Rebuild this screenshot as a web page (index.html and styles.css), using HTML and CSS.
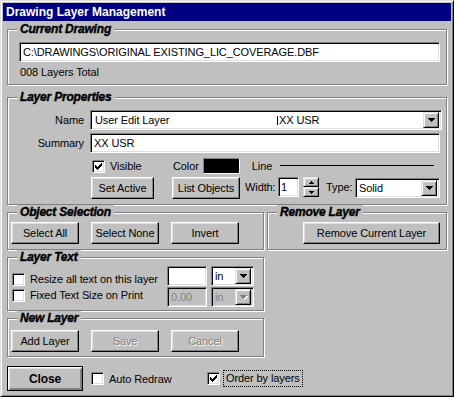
FILE: index.html
```html
<!DOCTYPE html>
<html lang="en">
<head>
    <meta charset="UTF-8">
    <title>Drawing Layer Management</title>
    <link rel="stylesheet" href="styles.css">
</head>
<body>

<div class="window">
    <div class="titlebar">Drawing Layer Management</div>

    <div class="content">
        <div class="group current">
            <span class="group-title">Current Drawing</span>
            <div class="field path">C:\DRAWINGS\ORIGINAL EXISTING_LIC_COVERAGE.DBF</div>
            <div class="count">008 Layers Total</div>
        </div>

        <div class="group props">
            <span class="group-title">Layer Properties</span>
            <div class="prop-grid">
                <span class="prop-label">Name</span>
                <div class="field combo name-combo">
                    <span class="combo-text name-text">User Edit Layer</span>
                    <span class="combo-text name-extra"><span class="tab-mark"></span>XX USR</span>
                    <span class="drop"><svg width="7" height="4" viewBox="0 0 7 4"><path d="M0 0h7v1h-1v1h-1v1h-1v1h-1v-1h-1v-1h-1v-1h-1z"/></svg></span>
                </div>

                <span class="prop-label summary-label">Summary</span>
                <div class="field summary">XX USR</div>

                <span></span>
                <div class="prop-row style-row">
                    <span class="check visible-check"><svg width="7" height="7" viewBox="0 0 7 7"><path d="M0 2h1v3h-1zM1 3h1v3h-1zM2 4h1v3h-1zM3 3h1v3h-1zM4 2h1v3h-1zM5 1h1v3h-1zM6 0h1v3h-1z"/></svg></span>
                    <span class="visible-label">Visible</span>
                    <span>Color</span>
                    <span class="swatch"></span>
                    <span class="line-label">Line</span>
                    <span class="line-sample"></span>
                </div>

                <span></span>
                <div class="prop-row action-row">
                    <button class="btn set-active">Set Active</button>
                    <button class="btn list-objects">List Objects</button>
                    <span class="w-label">Width:</span>
                    <div class="field width-input">1</div>
                    <div class="spinner">
                        <span class="spin-btn"><svg width="5" height="3" viewBox="0 0 5 3"><path d="M2 0h1v1h1v1h1v1h-5v-1h1v-1h1z"/></svg></span>
                        <span class="spin-btn"><svg width="5" height="3" viewBox="0 0 5 3"><path d="M0 0h5v1h-1v1h-1v1h-1v-1h-1v-1h-1z"/></svg></span>
                    </div>
                    <span class="t-label">Type:</span>
                    <div class="field combo type-combo">
                        <span class="combo-text">Solid</span>
                        <span class="drop"><svg width="7" height="4" viewBox="0 0 7 4"><path d="M0 0h7v1h-1v1h-1v1h-1v1h-1v-1h-1v-1h-1v-1h-1z"/></svg></span>
                    </div>
                </div>
            </div>
        </div>

        <div class="lower">
            <div class="left-col">
                <div class="group objsel">
                    <span class="group-title">Object Selection</span>
                    <button class="btn wide">Select All</button>
                    <button class="btn wide">Select None</button>
                    <button class="btn wide">Invert</button>
                </div>

                <div class="group layertext">
                    <span class="group-title">Layer Text</span>
                    <div class="lt-checks">
                        <div class="lt-check-row">
                            <span class="check"></span>
                            <span class="check-text">Resize all text on this layer</span>
                        </div>
                        <div class="lt-check-row">
                            <span class="check"></span>
                            <span class="check-text">Fixed Text Size on Print</span>
                        </div>
                    </div>
                    <div class="lt-fields">
                        <div class="lt-row">
                            <div class="field lt-input"></div>
                            <div class="field combo lt-combo">
                                <span class="combo-text">in</span>
                                <span class="drop"><svg width="7" height="4" viewBox="0 0 7 4"><path d="M0 0h7v1h-1v1h-1v1h-1v1h-1v-1h-1v-1h-1v-1h-1z"/></svg></span>
                            </div>
                        </div>
                        <div class="lt-row">
                            <div class="field lt-input disabled">0.00</div>
                            <div class="field combo lt-combo disabled">
                                <span class="combo-text">in</span>
                                <span class="drop"><svg width="7" height="4" viewBox="0 0 7 4"><path d="M0 0h7v1h-1v1h-1v1h-1v1h-1v-1h-1v-1h-1v-1h-1z"/></svg></span>
                            </div>
                        </div>
                    </div>
                </div>

                <div class="group newlayer">
                    <span class="group-title">New Layer</span>
                    <button class="btn wide">Add Layer</button>
                    <button class="btn wide" disabled>Save</button>
                    <button class="btn wide" disabled>Cancel</button>
                </div>
            </div>

            <div class="group remove">
                <span class="group-title">Remove Layer</span>
                <button class="btn remove-btn">Remove Current Layer</button>
            </div>
        </div>

        <div class="bottom">
            <button class="btn close">Close</button>
            <span class="check auto-check"></span>
            <span class="auto-label">Auto Redraw</span>
            <span class="check order-check"><svg width="7" height="7" viewBox="0 0 7 7"><path d="M0 2h1v3h-1zM1 3h1v3h-1zM2 4h1v3h-1zM3 3h1v3h-1zM4 2h1v3h-1zM5 1h1v3h-1zM6 0h1v3h-1z"/></svg></span>
            <span class="focus-label">Order by layers</span>
        </div>
    </div>
</div>

</body>
</html>
```

FILE: styles.css
```css
* {
    box-sizing: border-box;
}
body {
    margin: 0;
    font-family: "Liberation Sans", Arial, sans-serif;
    font-size: 11px;
    letter-spacing: -0.1px;
    color: #000;
    background-color: #c0c0c0;
}
.window {
    width: 454px;
    height: 397px;
    padding: 2px;
    background-color: #c0c0c0;
    border: 1px solid;
    border-color: #dfdfdf #000 #000 #dfdfdf;
    box-shadow: inset 1px 1px #fff, inset -1px -1px #808080;
}
.titlebar {
    height: 18px;
    line-height: 18px;
    padding-left: 3px;
    background-color: #000080;
    color: #fff;
    font-weight: bold;
    font-size: 12px;
    letter-spacing: 0;
}
.content {
    padding: 8px 4px 0 4px;
}

/* etched group boxes */
.group {
    position: relative;
    border: 1px solid #808080;
    box-shadow: inset 1px 1px #fff, 1px 1px #fff;
}
.group-title {
    position: absolute;
    top: -8px;
    left: 9px;
    padding: 0 3px;
    background-color: #c0c0c0;
    font-size: 12px;
    line-height: 14px;
    font-weight: bold;
    font-style: italic;
    letter-spacing: -0.2px;
    -webkit-text-stroke: 0.4px #000;
}

/* sunken fields */
.field {
    background-color: #fff;
    border: 1px solid;
    border-color: #808080 #fff #fff #808080;
    box-shadow: inset 1px 1px #000, inset -1px -1px #dfdfdf;
    height: 20px;
    line-height: 18px;
    padding-left: 3px;
    white-space: nowrap;
}
.field.disabled {
    background-color: #c0c0c0;
    color: #808080;
}
.combo {
    display: flex;
    align-items: center;
    padding: 2px 2px 2px 3px;
}
.combo-text {
    flex: 1;
    line-height: 16px;
}
.drop {
    width: 16px;
    height: 16px;
    display: flex;
    align-items: center;
    justify-content: center;
    background-color: #c0c0c0;
    border: 1px solid;
    border-color: #dfdfdf #000 #000 #dfdfdf;
    box-shadow: inset 1px 1px #fff, inset -1px -1px #808080;
}
.disabled .drop svg {
    fill: #808080;
    filter: drop-shadow(1px 1px 0 #fff);
}

/* raised buttons */
.btn {
    height: 22px;
    padding: 0;
    font-family: inherit;
    font-size: 11px;
    letter-spacing: -0.1px;
    color: #000;
    background-color: #c0c0c0;
    border: 1px solid;
    border-color: #fff #000 #000 #fff;
    box-shadow: inset -1px -1px #808080, inset 1px 1px #dfdfdf;
}
.btn:disabled {
    color: #808080;
    text-shadow: 1px 1px 0 #fff;
}

.check {
    width: 13px;
    height: 13px;
    flex: none;
    display: flex;
    align-items: center;
    justify-content: center;
    background-color: #fff;
    border: 1px solid;
    border-color: #808080 #fff #fff #808080;
    box-shadow: inset 1px 1px #000, inset -1px -1px #dfdfdf;
}

/* current drawing */
.current {
    width: 440px;
    height: 56px;
    padding: 12px 0 0 11px;
}
.path {
    width: 421px;
}
.count {
    margin-top: 4px;
    padding-left: 1px;
    line-height: 13px;
}

/* layer properties */
.props {
    width: 440px;
    height: 108px;
    margin-top: 12px;
    padding-top: 12px;
}
.prop-grid {
    display: grid;
    grid-template-columns: 76px auto;
    column-gap: 6px;
}
.prop-label {
    text-align: right;
    align-self: center;
}
.summary-label {
    margin-top: 3px;
}
.name-combo {
    width: 352px;
}
.name-text {
    flex: none;
    width: 183px;
    padding-left: 1px;
}
.tab-mark {
    display: inline-block;
    height: 9px;
    margin-right: 1px;
    border-left: 1px solid #000;
    vertical-align: -1px;
}
.summary {
    width: 350px;
    margin-top: 3px;
}
.prop-row {
    display: flex;
}
.style-row {
    height: 17px;
    margin-top: 4px;
    align-items: center;
}
.visible-check {
    margin: 2px 0 0 2px;
}
.visible-label {
    width: 63px;
    margin-left: 5px;
}
.swatch {
    width: 37px;
    height: 16px;
    margin-left: 4px;
    background-color: #000;
    border: 1px solid;
    border-color: #808080 #fff #fff #808080;
}
.line-label {
    margin-left: 12px;
}
.line-sample {
    width: 154px;
    margin-left: 8px;
    border-top: 1px solid #000;
}
.action-row {
    margin-top: 3px;
    align-items: flex-start;
}
.set-active {
    width: 63px;
    margin-left: 1px;
}
.list-objects {
    width: 68px;
    margin-left: 18px;
}
.w-label {
    width: 33px;
    margin-left: 5px;
    line-height: 20px;
}
.width-input {
    width: 21px;
    padding-left: 2px;
}
.spinner {
    width: 16px;
    height: 20px;
    margin-left: 4px;
    display: flex;
    flex-direction: column;
}
.spin-btn {
    height: 10px;
    display: flex;
    align-items: center;
    justify-content: center;
    background-color: #c0c0c0;
    border: 1px solid;
    border-color: #dfdfdf #000 #000 #dfdfdf;
    box-shadow: inset 1px 1px #fff, inset -1px -1px #808080;
}
.t-label {
    width: 29px;
    margin-left: 7px;
    line-height: 20px;
}
.type-combo {
    width: 85px;
    margin-top: 1px;
}

/* lower groups */
.lower {
    display: flex;
    align-items: flex-start;
    gap: 3px;
    margin-top: 7px;
}
.left-col {
    width: 257px;
}
.objsel, .newlayer {
    display: flex;
    gap: 12px;
    padding: 9px 0 0 3px;
    height: 38px;
}
.newlayer {
    height: 39px;
    margin-top: 7px;
    padding-top: 11px;
}
.btn.wide {
    width: 68px;
}
.remove {
    width: 180px;
    height: 38px;
    padding: 9px 0 0 35px;
}
.remove-btn {
    width: 137px;
}
.layertext {
    display: grid;
    grid-template-columns: 156px auto;
    align-items: start;
    height: 54px;
    margin-top: 7px;
    padding: 8px 0 0 3px;
}
.lt-checks {
    margin-top: 5px;
}
.lt-check-row {
    display: flex;
    align-items: center;
    height: 16px;
}
.lt-check-row .check {
    margin-left: 1px;
}
.check-text {
    margin-left: 5px;
}
.lt-row {
    display: flex;
    gap: 4px;
    margin-bottom: 1px;
}
.lt-input {
    width: 40px;
}
.lt-combo {
    width: 43px;
}

/* bottom row */
.bottom {
    display: flex;
    align-items: center;
    margin-top: 9px;
}
.close {
    width: 76px;
    height: 25px;
    font-weight: bold;
    font-size: 12px;
    border-color: #000;
    box-shadow: inset 1px 1px #fff, inset -1px -1px #808080, inset 2px 2px #dfdfdf, inset -2px -2px #808080;
}
.auto-check {
    margin-left: 8px;
}
.auto-label {
    width: 98px;
    margin-left: 5px;
}
.focus-label {
    margin-left: 3px;
    padding: 1px 2px;
    line-height: 13px;
    border: 1px dotted #000;
}
```
